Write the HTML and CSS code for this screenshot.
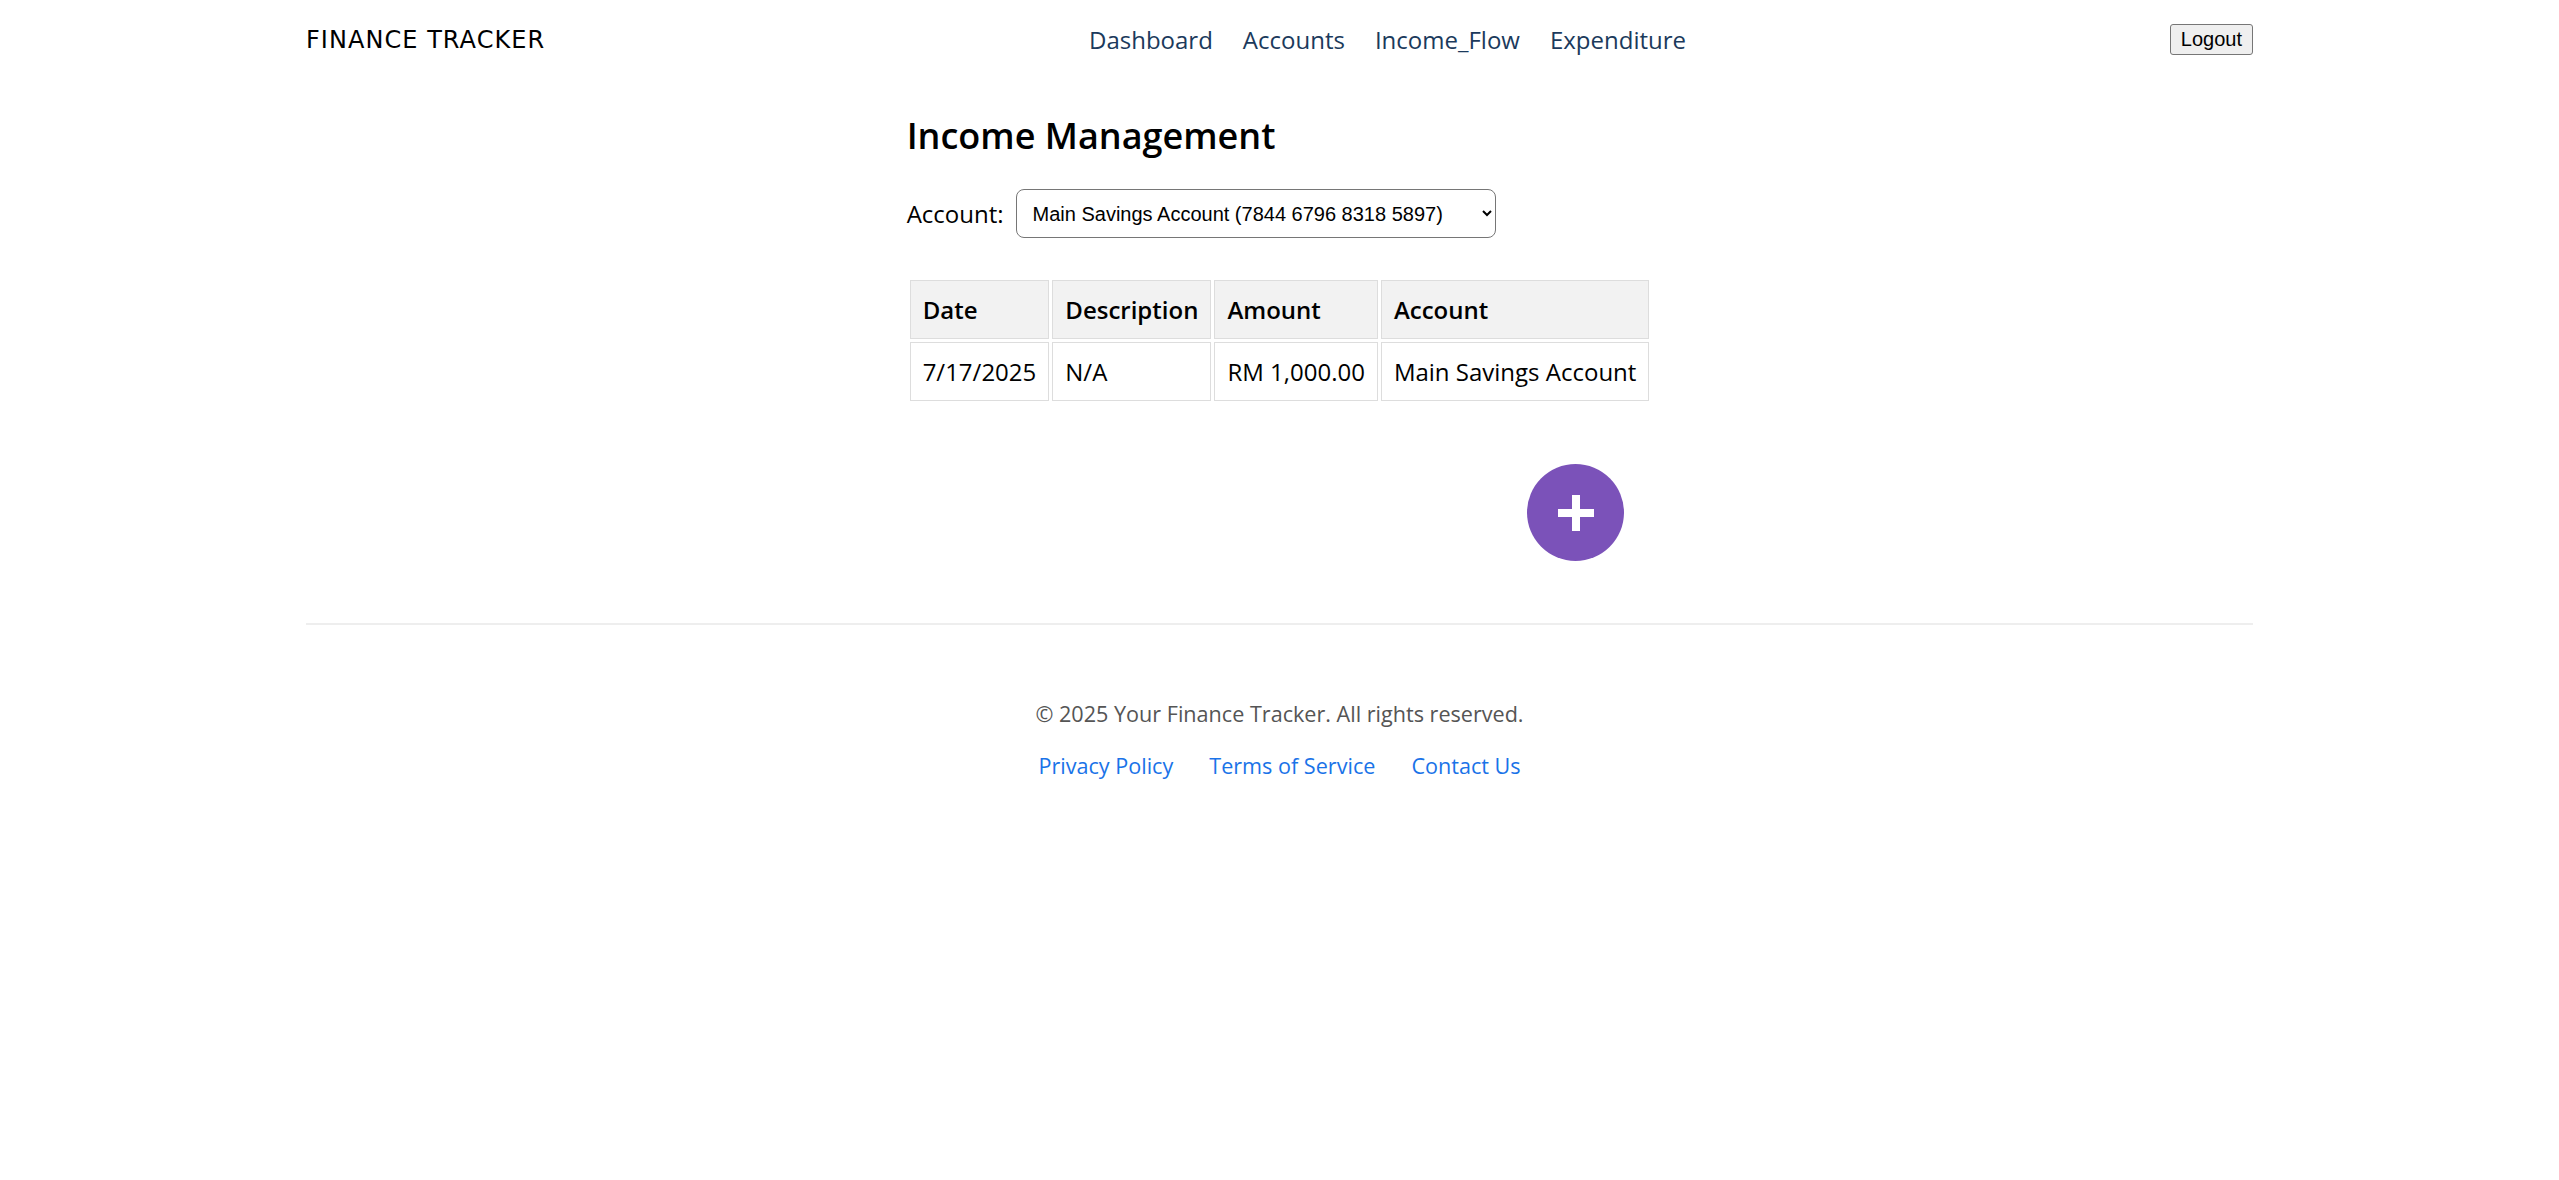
FILE: index.html
```html
<!DOCTYPE html>
<html lang="en">
<head>
<meta charset="utf-8">
<title>Income Management - Finance Tracker</title>
<link rel="stylesheet" href="styles.css">
</head>
<body>
<div class="page">
  <header class="topbar">
    <div class="logo">FINANCE TRACKER</div>
    <ul class="nav">
      <li><a href="#">Dashboard</a></li>
      <li><a href="#">Accounts</a></li>
      <li><a href="#">Income_Flow</a></li>
      <li><a href="#">Expenditure</a></li>
    </ul>
    <button class="logout">Logout</button>
  </header>

  <main class="content">
    <h2 class="title">Income Management</h2>
    <div class="account-row">
      <label class="account-label" for="acc">Account:</label>
      <select id="acc" class="account-select">
        <option>Main Savings Account (7844 6796 8318 5897)</option>
      </select>
    </div>
    <table class="income-table">
      <thead>
        <tr><th>Date</th><th>Description</th><th>Amount</th><th>Account</th></tr>
      </thead>
      <tbody>
        <tr><td>7/17/2025</td><td>N/A</td><td>RM 1,000.00</td><td>Main Savings Account</td></tr>
      </tbody>
    </table>
    <button class="add-btn" aria-label="Add income">
      <svg width="36" height="36" viewBox="0 0 36 36"><rect x="14" y="0" width="8" height="36" fill="#fff"/><rect x="0" y="14" width="36" height="8" fill="#fff"/></svg>
    </button>
  </main>

  <footer class="footer">
    <p class="copy">© 2025 Your Finance Tracker. All rights reserved.</p>
    <div class="footer-links">
      <a href="#">Privacy Policy</a>
      <a href="#">Terms of Service</a>
      <a href="#">Contact Us</a>
    </div>
  </footer>
</div>
</body>
</html>
```

FILE: styles.css
```css
html, body {
  margin: 0;
  padding: 0;
  background: #fff;
}
body {
  font-family: "Open Sans", "Liberation Sans", sans-serif;
  font-size: 24px;
  color: #000;
}
.page {
  max-width: 1947px;
  margin: 0 auto;
}
.topbar {
  display: flex;
  justify-content: space-between;
  align-items: center;
  height: 78px;
}
.logo {
  font-family: "DejaVu Sans", sans-serif;
  font-size: 24px;
  font-weight: 500;
  color: #000;
  letter-spacing: 1.05px;
  padding-top: 1px;
}
.nav {
  display: flex;
  gap: 30px;
  list-style: none;
  margin: 0;
  padding: 0 0 0 60px;
}
.nav a {
  color: #1b3a5c;
  text-decoration: none;
  font-size: 24px;
}
.logout {
  font-family: "Liberation Sans", Arial, sans-serif;
  font-size: 20px;
  padding: 3px 10px;
  border: 1px solid #767676;
  border-radius: 3px;
  background: #efefef;
  color: #000;
}
.content {
  display: flex;
  flex-direction: column;
  width: fit-content;
  margin: 0 auto;
}
.title {
  font-size: 36px;
  font-weight: 600;
  margin: 33px 0 29px;
}
.account-row {
  display: flex;
  align-items: center;
  gap: 12px;
}
.account-select {
  width: 480px;
  height: 49px;
  font-family: "Liberation Sans", Arial, sans-serif;
  font-size: 20px;
  padding: 0 12px;
  border: 1px solid #767676;
  border-radius: 8px;
  background: #fff;
  color: #000;
}
.income-table {
  margin-top: 39px;
  border-spacing: 3px;
}
.income-table th,
.income-table td {
  border: 1px solid #ddd;
  padding: 12px;
  text-align: left;
  font-size: 24px;
}
.income-table th {
  background: #f2f2f2;
  font-weight: 600;
}
.add-btn {
  align-self: flex-end;
  margin: 60px 28px 62px 0;
  width: 97px;
  height: 97px;
  border-radius: 50%;
  border: none;
  background: #7b52b9;
  display: flex;
  align-items: center;
  justify-content: center;
  padding: 0;
}
.footer {
  border-top: 2px solid #eeeeee;
  text-align: center;
  padding-top: 74px;
  font-size: 21.6px;
}
.copy {
  margin: 0;
  color: #555;
}
.footer-links {
  display: flex;
  justify-content: center;
  gap: 36px;
  margin-top: 23px;
}
.footer-links a {
  color: #1a73e8;
  text-decoration: none;
}
```
